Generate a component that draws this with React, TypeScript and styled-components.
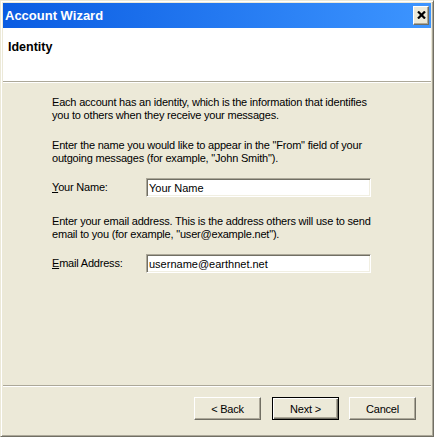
import styled, { createGlobalStyle } from 'styled-components';

const GlobalStyle = createGlobalStyle`
  html, body {
    margin: 0;
    padding: 0;
    background: #ece9d8;
  }

  * {
    box-sizing: border-box;
  }
`;

const Window = styled.div`
  display: flex;
  flex-direction: column;
  width: 434px;
  height: 437px;
  padding: 2px;
  background: #ece9d8;
  border: 1px solid;
  border-color: #ece9d8 #716f64 #716f64 #ece9d8;
  box-shadow: inset 1px 1px #fff, inset -1px -1px #aca899;
  font-family: 'Liberation Sans', Arial, sans-serif;
  font-size: 11px;
  letter-spacing: -0.2px;
  color: #000;
`;

const TitleBar = styled.div`
  display: flex;
  align-items: center;
  justify-content: space-between;
  height: 25px;
  padding: 0 2px;
  background: linear-gradient(to right, #0a5ce2, #3d95ff);
`;

const Title = styled.span`
  font-size: 13px;
  font-weight: 700;
  letter-spacing: 0;
  color: #fff;
`;

const CloseButton = styled.div`
  display: flex;
  align-items: center;
  justify-content: center;
  width: 16px;
  height: 19px;
  margin-top: -1px;
  background: #ece9d8;
  border: 1px solid;
  border-color: #fff #716f64 #716f64 #fff;
  box-shadow: inset -1px -1px #aca899;
`;

const Header = styled.div`
  height: 53px;
  padding: 12px 5px 0;
  background: #fff;
`;

const HeaderTitle = styled.div`
  font-size: 12.5px;
  line-height: 15px;
  font-weight: 700;
  letter-spacing: 0;
`;

const Separator = styled.div`
  height: 2px;
  border-top: 1px solid #aca899;
  border-bottom: 1px solid #fff;
`;

const Body = styled.div`
  flex: 1;
  padding: 13px 0 0 49px;
`;

const Text = styled.p<{ $gap: number }>`
  margin: 0 0 ${(p) => p.$gap}px;
  line-height: 13px;
  white-space: nowrap;
`;

const Field = styled.div<{ $gap: number }>`
  display: flex;
  align-items: center;
  margin-bottom: ${(p) => p.$gap}px;
`;

const Label = styled.label`
  width: 94px;
  line-height: 13px;
`;

const Key = styled.span`
  text-decoration: underline;
`;

const Input = styled.input`
  width: 225px;
  height: 19px;
  margin: 0;
  padding: 0 2px;
  border: 1px solid;
  border-color: #aca899 #fff #fff #aca899;
  box-shadow: inset 1px 1px #716f64, inset -1px -1px #f1efe2;
  background: #fff;
  font: inherit;
  color: #000;
  outline: none;
`;

const Footer = styled.div`
  display: flex;
  justify-content: flex-end;
  padding: 10px 15px 14px;
`;

const Button = styled.div<{ $default?: boolean; $gap?: number }>`
  display: flex;
  align-items: center;
  justify-content: center;
  width: 67px;
  height: 23px;
  margin-left: ${(p) => p.$gap ?? 0}px;
  background: #ece9d8;
  border: 1px solid;
  border-color: ${(p) => (p.$default ? '#000' : '#fff #716f64 #716f64 #fff')};
  box-shadow: ${(p) =>
    p.$default
      ? 'inset 1px 1px #fff, inset -1px -1px #716f64, inset -2px -2px #aca899'
      : 'inset -1px -1px #aca899'};
`;

export default function App() {
  return (
    <>
      <GlobalStyle />
      <Window>
        <TitleBar>
          <Title>Account Wizard</Title>
          <CloseButton>
            <svg width="9" height="8" viewBox="0 0 9 8">
              <path d="M1 0.5 L8 7.5 M8 0.5 L1 7.5" stroke="#000" strokeWidth="2.2" />
            </svg>
          </CloseButton>
        </TitleBar>
        <Header>
          <HeaderTitle>Identity</HeaderTitle>
        </Header>
        <Separator />
        <Body>
          <Text $gap={17}>
            Each account has an identity, which is the information that identifies
            <br />
            you to others when they receive your messages.
          </Text>
          <Text $gap={13}>
            Enter the name you would like to appear in the "From" field of your
            <br />
            outgoing messages (for example, "John Smith").
          </Text>
          <Field $gap={18}>
            <Label>
              <Key>Y</Key>our Name:
            </Label>
            <Input readOnly value="Your Name" />
          </Field>
          <Text $gap={13}>
            Enter your email address. This is the address others will use to send
            <br />
            email to you (for example, "user@example.net").
          </Text>
          <Field $gap={0}>
            <Label>
              <Key>E</Key>mail Address:
            </Label>
            <Input readOnly value="username@earthnet.net" />
          </Field>
        </Body>
        <Separator />
        <Footer>
          <Button>&lt; Back</Button>
          <Button $default $gap={11}>
            Next &gt;
          </Button>
          <Button $gap={10}>Cancel</Button>
        </Footer>
      </Window>
    </>
  );
}
